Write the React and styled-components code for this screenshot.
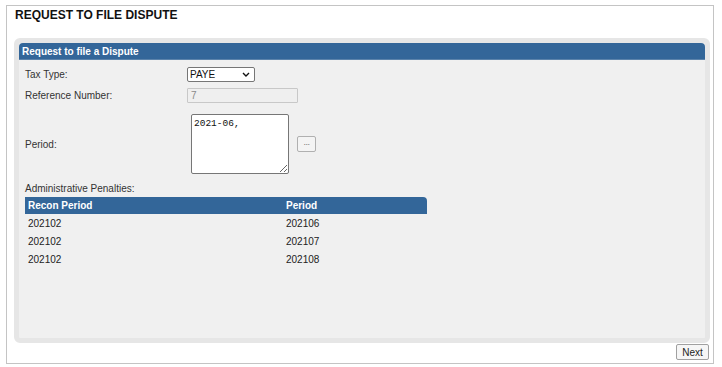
import React from "react";
import styled, { createGlobalStyle } from "styled-components";

const GlobalStyle = createGlobalStyle`
  body {
    margin: 0;
    background: #fff;
    font-family: "Liberation Sans", Arial, sans-serif;
  }
`;

const Frame = styled.div`
  box-sizing: border-box;
  margin: 5px 0 0 6px;
  width: 708px;
  height: 359px;
  border: 1px solid #c4c4c4;
  padding: 0 3px 0 7px;
  display: flex;
  flex-direction: column;
`;

const Title = styled.h1`
  margin: 0 0 16px 1px;
  padding-top: 2px;
  font-size: 12px;
  line-height: 14px;
  font-weight: bold;
  color: #111;
`;

const Panel = styled.section`
  flex: 1;
  box-sizing: border-box;
  border: 5px solid #e6e6e6;
  border-radius: 6px;
  background: #f0f0f0;
`;

const PanelHeader = styled.div`
  height: 17px;
  line-height: 17px;
  padding-left: 3px;
  background: #336699;
  border-radius: 4px 4px 0 0;
  border-bottom: 1px solid #5b83ab;
  box-sizing: border-box;
  color: #fff;
  font-size: 10px;
  font-weight: bold;
`;

const Body = styled.div`
  padding: 7px 0 0 6px;
`;

const Row = styled.div`
  display: flex;
  align-items: center;
  margin-top: ${({ $gap }) => $gap || 0}px;
`;

const Label = styled.span`
  width: 162px;
  flex: none;
  font-size: 10px;
  color: #333;
`;

const SelectWrap = styled.div`
  position: relative;
  width: 68px;
  height: 15px;
`;

const Select = styled.select`
  display: block;
  appearance: none;
  box-sizing: border-box;
  width: 100%;
  height: 100%;
  margin: 0;
  padding: 0 0 0 2px;
  border: 1px solid #767676;
  border-radius: 2px;
  background: #fff;
  font-family: "Liberation Sans", Arial, sans-serif;
  font-size: 10px;
  color: #111;
`;

const Chevron = styled.svg`
  position: absolute;
  right: 5px;
  top: 5px;
  pointer-events: none;
`;

const TextInput = styled.input`
  display: block;
  box-sizing: border-box;
  width: 111px;
  height: 15px;
  margin: 0;
  padding: 0 0 0 3px;
  border: 1px solid #c8c8c8;
  border-radius: 1px;
  background: #efefef;
  font-family: "Liberation Sans", Arial, sans-serif;
  font-size: 10px;
  color: #8a8a8a;
`;

const Area = styled.textarea`
  display: block;
  box-sizing: border-box;
  width: 98px;
  height: 60px;
  margin: 0 0 0 4px;
  padding: 3px 2px;
  border: 1px solid #767676;
  border-radius: 2px;
  background: #fff;
  font-family: "Liberation Mono", "DejaVu Sans Mono", monospace;
  font-size: 9.5px;
  line-height: 11px;
  color: #111;
`;

const SmallButton = styled.button`
  box-sizing: border-box;
  margin-left: 8px;
  width: 19px;
  height: 16px;
  padding: 0 0 4px;
  border: 1px solid #b0b0b0;
  border-radius: 2px;
  background: #f4f4f4;
  font-family: "Liberation Sans", Arial, sans-serif;
  font-size: 9px;
  letter-spacing: -0.5px;
  color: #777;
`;

const Caption = styled.div`
  margin-top: 9px;
  font-size: 10px;
  line-height: 12px;
  color: #333;
`;

const Table = styled.table`
  margin-top: 2px;
  width: 402px;
  border-collapse: collapse;
  font-size: 10px;
`;

const Th = styled.th`
  height: 17px;
  padding: 0 0 0 3px;
  text-align: left;
  background: #336699;
  color: #fff;
  font-weight: bold;
  width: ${({ $w }) => ($w ? `${$w}px` : "auto")};
  border-top-right-radius: ${({ $last }) => ($last ? "4px" : "0")};
`;

const Td = styled.td`
  height: 18px;
  padding: 0 0 0 3px;
  color: #222;
`;

const Footer = styled.div`
  height: 20px;
  display: flex;
  justify-content: flex-end;
  align-items: flex-start;
  padding-top: 1px;
  box-sizing: border-box;
`;

const NextButton = styled.button`
  box-sizing: border-box;
  width: 33px;
  height: 16px;
  margin-right: 1px;
  padding: 0;
  border: 1px solid #a0a0a0;
  border-radius: 2px;
  background: #f6f6f6;
  font-family: "Liberation Sans", Arial, sans-serif;
  font-size: 10px;
  color: #222;
`;

const penalties = [
  ["202102", "202106"],
  ["202102", "202107"],
  ["202102", "202108"],
];

export default function App() {
  return (
    <>
      <GlobalStyle />
      <Frame>
        <Title>REQUEST TO FILE DISPUTE</Title>
        <Panel>
          <PanelHeader>Request to file a Dispute</PanelHeader>
          <Body>
            <Row>
              <Label>Tax Type:</Label>
              <SelectWrap>
                <Select defaultValue="PAYE">
                  <option>PAYE</option>
                </Select>
                <Chevron width="8" height="5" viewBox="0 0 8 5">
                  <path d="M1 1l3 3 3-3" fill="none" stroke="#111" strokeWidth="1.4" />
                </Chevron>
              </SelectWrap>
            </Row>
            <Row $gap={6}>
              <Label>Reference Number:</Label>
              <TextInput disabled defaultValue="7" />
            </Row>
            <Row $gap={11}>
              <Label>Period:</Label>
              <Area defaultValue="2021-06," />
              <SmallButton>...</SmallButton>
            </Row>
            <Caption>Administrative Penalties:</Caption>
            <Table>
              <thead>
                <tr>
                  <Th $w={255}>Recon Period</Th>
                  <Th $last>Period</Th>
                </tr>
              </thead>
              <tbody>
                {penalties.map(([recon, period], i) => (
                  <tr key={i}>
                    <Td>{recon}</Td>
                    <Td>{period}</Td>
                  </tr>
                ))}
              </tbody>
            </Table>
          </Body>
        </Panel>
        <Footer>
          <NextButton>Next</NextButton>
        </Footer>
      </Frame>
    </>
  );
}
